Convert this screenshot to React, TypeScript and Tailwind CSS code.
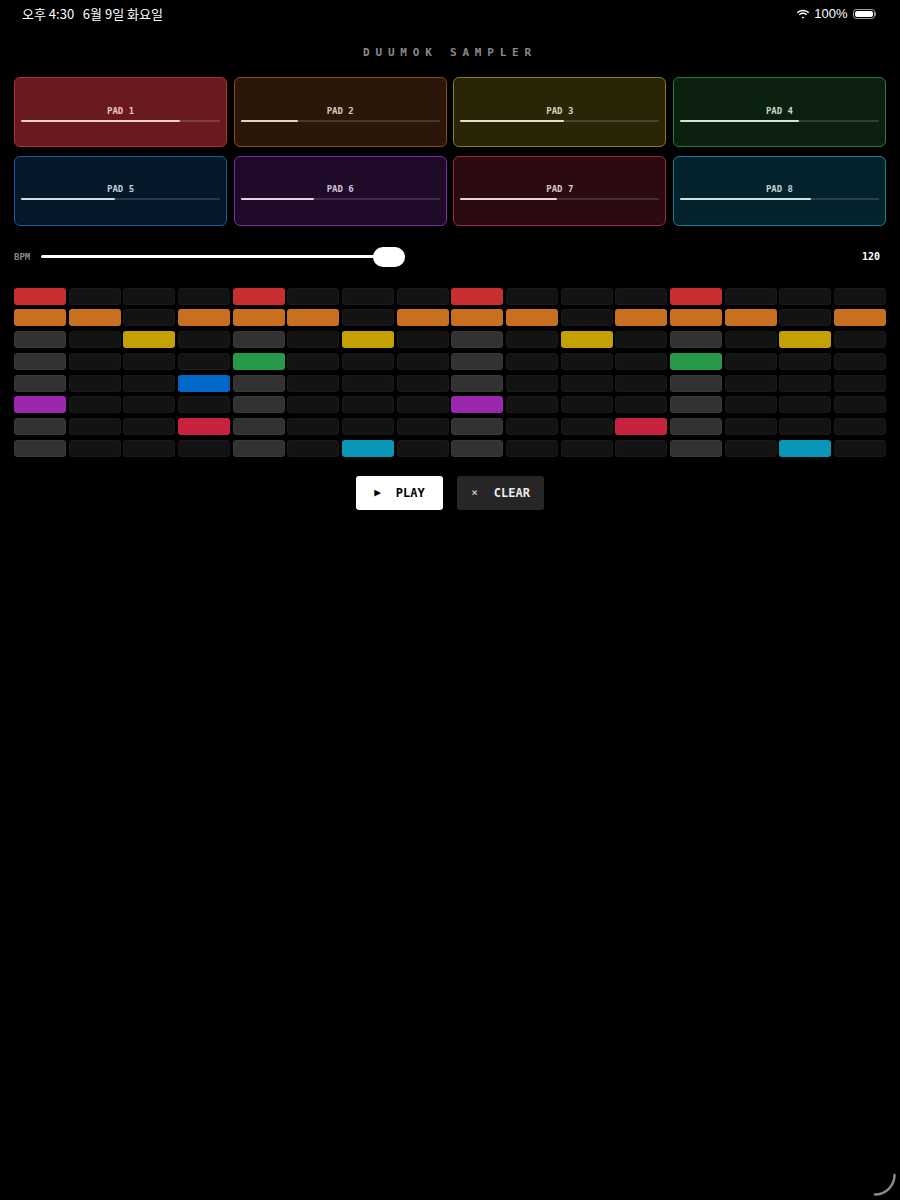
import { useState } from "react";

const pads = [
  { name: "PAD 1", level: 0.8, box: "bg-[#6a1a1e] border-[#b03036]", label: "text-[#e6c4c4]", fill: "bg-[#ecd2d2]" },
  { name: "PAD 2", level: 0.29, box: "bg-[#2a1709] border-[#8b4a1c]", label: "text-[#d8c8bc]", fill: "bg-[#e2d4c6]" },
  { name: "PAD 3", level: 0.52, box: "bg-[#2b2507] border-[#8c7a1c]", label: "text-[#d8d2bc]", fill: "bg-[#e4dfcc]" },
  { name: "PAD 4", level: 0.6, box: "bg-[#0b200f] border-[#2a7a3a]", label: "text-[#c6d6c8]", fill: "bg-[#d6e2d6]" },
  { name: "PAD 5", level: 0.47, box: "bg-[#041829] border-[#1c5c9c]", label: "text-[#c2ccd8]", fill: "bg-[#d4dce6]" },
  { name: "PAD 6", level: 0.37, box: "bg-[#1f0a2a] border-[#7c2c9c]", label: "text-[#d4c4dc]", fill: "bg-[#e2d4e8]" },
  { name: "PAD 7", level: 0.485, box: "bg-[#2b0a12] border-[#9c2a3c]", label: "text-[#dcc4c8]", fill: "bg-[#e6d2d6]" },
  { name: "PAD 8", level: 0.66, box: "bg-[#03222b] border-[#1b7a9a]", label: "text-[#c2d4da]", fill: "bg-[#d2e0e6]" },
];

// one row per pad, steps are 1-based
const tracks = [
  { on: "bg-[#c62e30]", steps: [1, 5, 9, 13] },
  { on: "bg-[#c8701f]", steps: [1, 2, 4, 5, 6, 8, 9, 10, 12, 13, 14, 16] },
  { on: "bg-[#c4a000]", steps: [3, 7, 11, 15] },
  { on: "bg-[#27994a]", steps: [5, 13] },
  { on: "bg-[#0068c9]", steps: [4] },
  { on: "bg-[#9b27af]", steps: [1, 9] },
  { on: "bg-[#c7233f]", steps: [4, 12] },
  { on: "bg-[#0897b7]", steps: [7, 15] },
];

const steps = Array.from({ length: 16 }, (_, i) => i + 1);

function StatusBar() {
  return (
    <div className="h-[28px] px-[22px] flex items-center justify-between text-white text-[13px] font-['Noto_Sans_CJK_KR','Noto_Sans',sans-serif]">
      <span className="whitespace-pre">오후 4:30   6월 9일 화요일</span>
      <div className="flex items-center gap-[4px] mr-[2px]">
        <svg width="14" height="11" viewBox="0 0 16 12" fill="white">
          <path d="M8 2.2c2.3 0 4.4.9 6 2.4l1.1-1.1C13.2 1.7 10.7.6 8 .6S2.8 1.7.9 3.5L2 4.6c1.6-1.5 3.7-2.4 6-2.4z" />
          <path d="M8 5.4c1.4 0 2.7.5 3.7 1.4l1.1-1.1C11.5 4.5 9.8 3.8 8 3.8s-3.5.7-4.8 1.9l1.1 1.1c1-.9 2.3-1.4 3.7-1.4z" />
          <path d="M8 8.6c.6 0 1.1.2 1.5.6L8 10.8 6.5 9.2c.4-.4.9-.6 1.5-.6z" />
        </svg>
        <span className="font-['Liberation_Sans',sans-serif]">100%</span>
        <div className="flex items-center ml-[1px]">
          <div className="w-[22px] h-[10px] rounded-[3px] border border-[#9a9a9a] p-[1px]">
            <div className="w-full h-full rounded-[2px] bg-white" />
          </div>
          <div className="w-[1.5px] h-[4px] rounded-r-sm bg-[#9a9a9a]" />
        </div>
      </div>
    </div>
  );
}

function Pad({ pad }: { pad: (typeof pads)[number] }) {
  return (
    <div className={`h-[70px] rounded-[6px] border ${pad.box} flex flex-col items-center justify-center px-[6px] pt-[3px]`}>
      <span className={`text-[9px] leading-[11px] font-bold mb-[3px] ${pad.label}`}>{pad.name}</span>
      <div className="w-full h-[2px] rounded-full bg-white/15 flex">
        <div className={`h-full rounded-full ${pad.fill}`} style={{ width: `${pad.level * 100}%` }} />
      </div>
    </div>
  );
}

export default function App() {
  const [bpm] = useState(120);

  return (
    <div className="relative w-full min-h-[1200px] bg-black font-['DejaVu_Sans_Mono',monospace]">
      <StatusBar />

      <h1 className="pt-[19px] text-center text-[11px] leading-[12px] font-bold tracking-[5.8px] text-[#8a8a8a]">
        DUUMOK SAMPLER
      </h1>

      <div className="mt-[18px] px-[14px] grid grid-cols-4 gap-x-[6.5px] gap-y-[8.5px]">
        {pads.map((pad) => (
          <Pad key={pad.name} pad={pad} />
        ))}
      </div>

      <div className="mt-[21px] px-[14px] h-[20px] flex items-center">
        <span className="text-[9px] font-bold text-[#8a8a8a] w-[27px] pt-[2px]">BPM</span>
        <div className="w-[364px] flex items-center">
          <div className="flex-1 h-[3.5px] rounded-l-full bg-white" />
          <div className="w-[32px] h-[20px] rounded-full bg-white -ml-[2px]" />
        </div>
        <span className="ml-auto mr-[6px] text-[10px] font-bold text-white">{bpm}</span>
      </div>

      <div className="mt-[21px] px-[14px] grid grid-cols-16 gap-x-[2.5px] gap-y-[4.8px]">
        {tracks.map((track, row) =>
          steps.map((step) => {
            const active = track.steps.includes(step);
            const beat = (step - 1) % 4 === 0;
            const cls = active
              ? track.on
              : beat
                ? "bg-[#323232] border border-[#3a3a3a]"
                : "bg-[#131313] border border-[#1a1a1a]";
            return <div key={`${row}-${step}`} className={`h-[17px] rounded-[3px] ${cls}`} />;
          })
        )}
      </div>

      <div className="mt-[19px] flex justify-center gap-[14px]">
        <button className="w-[87px] h-[34px] rounded-[3px] bg-white text-black flex items-center justify-center gap-[15px] text-[12px] font-bold">
          <span className="text-[11px]">▶</span>
          <span>PLAY</span>
        </button>
        <button className="w-[87px] h-[34px] rounded-[3px] bg-[#262626] text-[#ececec] flex items-center justify-center gap-[16px] text-[12px] font-bold">
          <span className="text-[11px] font-normal">×</span>
          <span>CLEAR</span>
        </button>
      </div>

      <svg className="absolute right-0 bottom-0" width="30" height="30" viewBox="0 0 30 30" fill="none">
        <path d="M5 24.5A19.5 19.5 0 0 0 24.5 5" stroke="#8a8a8a" strokeWidth="2.5" strokeLinecap="round" />
      </svg>
    </div>
  );
}
